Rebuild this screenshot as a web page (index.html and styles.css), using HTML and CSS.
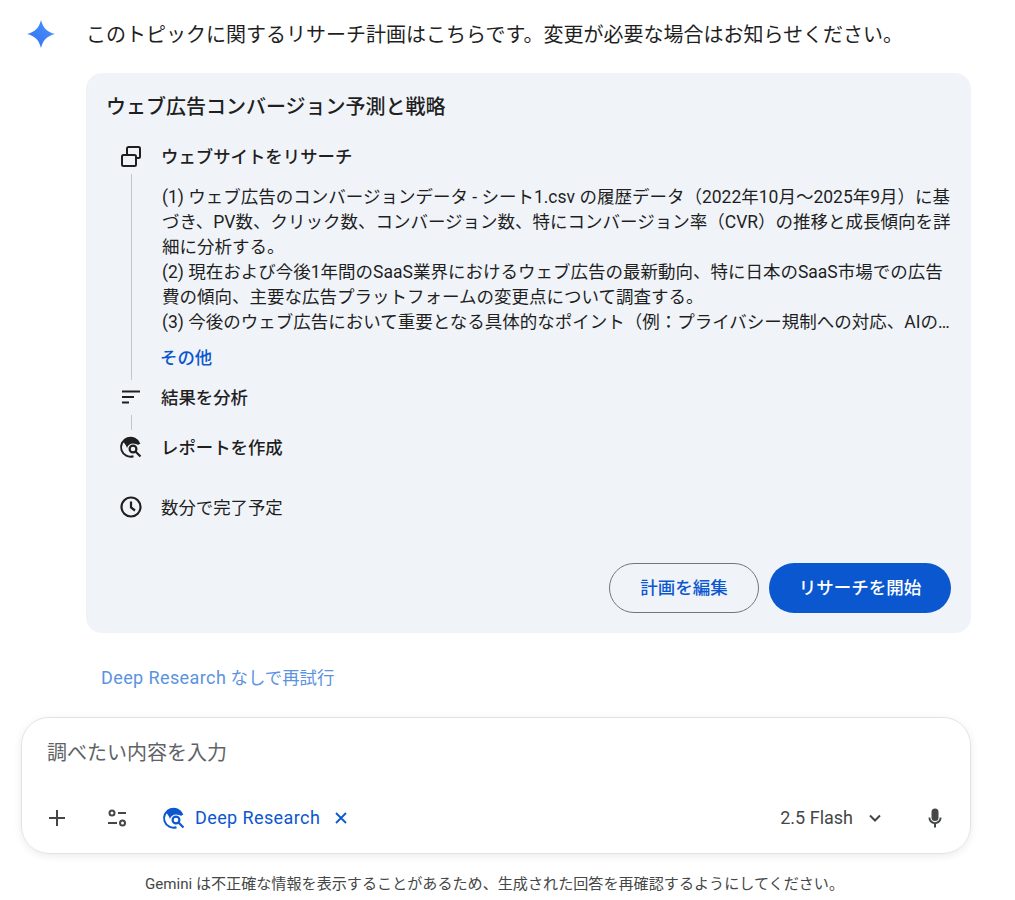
FILE: index.html
```html
<!DOCTYPE html>
<html lang="ja">
<head>
  <title>Gemini Deep Research</title>
  <link rel="stylesheet" href="styles.css">
</head>
<body>
  <div class="response">
    <svg class="spark" viewBox="0 0 32 32" width="32" height="32">
      <defs>
        <linearGradient id="sparkGrad" x1="0" y1="1" x2="1" y2="0">
          <stop offset="0" stop-color="#2f6df0"/>
          <stop offset="1" stop-color="#4a96ff"/>
        </linearGradient>
      </defs>
      <path fill="url(#sparkGrad)" d="M16 2C18 10 22 14 30 16C22 18 18 22 16 30C14 22 10 18 2 16C10 14 14 10 16 2Z"/>
    </svg>
    <div class="response-body">
      <p class="intro">このトピックに関するリサーチ計画はこちらです。変更が必要な場合はお知らせください。</p>

      <div class="plan-card">
        <h2>ウェブ広告コンバージョン予測と戦略</h2>

        <div class="step">
          <svg class="step-icon" viewBox="0 0 24 24" width="24" height="24" fill="none" stroke="#1f1f1f" stroke-width="2">
            <rect x="3" y="11" width="14" height="11" rx="1.5"/>
            <path d="M8 11V4.500C8 3.700 8.700 3 9.500 3H19.500C20.300 3 21 3.700 21 4.500V12.500C21 13.300 20.300 14 19.500 14H17"/>
          </svg>
          <span class="step-title">ウェブサイトをリサーチ</span>
        </div>
        <div class="step-detail">
          <div class="rail rail-long"></div>
          <div class="detail-text">
            <p class="plan-text">(1) ウェブ広告のコンバージョンデータ - シート1.csv の履歴データ（2022年10月～2025年9月）に基づき、PV数、クリック数、コンバージョン数、特にコンバージョン率（CVR）の推移と成長傾向を詳細に分析する。<br>(2) 現在および今後1年間のSaaS業界におけるウェブ広告の最新動向、特に日本のSaaS市場での広告費の傾向、主要な広告プラットフォームの変更点について調査する。<br>(3) 今後のウェブ広告において重要となる具体的なポイント（例：プライバシー規制への対応、AIの…</p>
            <a class="more-link">その他</a>
          </div>
        </div>

        <div class="step step-analyze">
          <svg class="step-icon" viewBox="0 0 24 24" width="24" height="24" fill="none" stroke="#1f1f1f" stroke-width="2">
            <path d="M3 6.500H21M3 12H15M3 17.500H10"/>
          </svg>
          <span class="step-title">結果を分析</span>
        </div>
        <div class="rail rail-short"></div>
        <div class="step">
          <svg class="step-icon research-icon" viewBox="0 0 24 24" width="24" height="24">
            <path class="globe-ring" d="M20.500 9A9.500 9.500 0 1 0 14.500 21.200"/>
            <path class="globe-land" d="M12 3A9 9 0 0 0 4.500 7C6 9 7.500 11 8 13C9 10 11 8.500 14 8.500C16 8.500 18 9.500 19.500 10L20 8A9 9 0 0 0 12 3Z"/>
            <circle class="globe-lens" cx="14" cy="14" r="3.400"/>
            <path class="globe-lens" d="M16.500 16.500L21.500 21.500"/>
          </svg>
          <span class="step-title">レポートを作成</span>
        </div>
        <div class="step step-eta">
          <svg class="step-icon" viewBox="0 0 24 24" width="24" height="24" fill="none" stroke="#1f1f1f" stroke-width="2.200">
            <circle cx="12" cy="12" r="9.500"/>
            <path d="M12 6.500V12.500L16 15.500"/>
          </svg>
          <span class="step-eta-text">数分で完了予定</span>
        </div>

        <div class="card-actions">
          <button class="btn btn-outline">計画を編集</button>
          <button class="btn btn-primary">リサーチを開始</button>
        </div>
      </div>

      <a class="retry-link"><span class="brand-name">Deep Research</span> なしで再試行</a>
    </div>
  </div>

  <div class="composer">
    <div class="composer-input">調べたい内容を入力</div>
    <div class="composer-tools">
      <svg class="tool-plus" viewBox="0 0 24 24" width="24" height="24" fill="none" stroke="#444746" stroke-width="2">
        <path d="M12 4V20M4 12H20"/>
      </svg>
      <svg class="tool-sliders" viewBox="0 0 24 24" width="24" height="24" fill="none" stroke="#444746" stroke-width="2">
        <circle cx="7" cy="7" r="2.500"/>
        <path d="M13 7H21M3 17H12"/>
        <circle cx="17.500" cy="17" r="2.500"/>
      </svg>
      <svg class="tool-research research-icon research-icon-blue" viewBox="0 0 24 24" width="24" height="24">
        <path class="globe-ring" d="M20.500 9A9.500 9.500 0 1 0 14.500 21.200"/>
        <path class="globe-land" d="M12 3A9 9 0 0 0 4.500 7C6 9 7.500 11 8 13C9 10 11 8.500 14 8.500C16 8.500 18 9.500 19.500 10L20 8A9 9 0 0 0 12 3Z"/>
        <circle class="globe-lens" cx="14" cy="14" r="3.400"/>
        <path class="globe-lens" d="M16.500 16.500L21.500 21.500"/>
      </svg>
      <span class="tool-label">Deep Research</span>
      <svg class="tool-close" viewBox="0 0 16 16" width="16" height="16" fill="none" stroke="#0b57d0" stroke-width="1.800">
        <path d="M3 3L13 13M13 3L3 13"/>
      </svg>
      <span class="model-name">2.5 Flash</span>
      <svg class="model-caret" viewBox="0 0 16 16" width="16" height="16" fill="none" stroke="#444746" stroke-width="2">
        <path d="M3 5.500L8 10.500L13 5.500"/>
      </svg>
      <svg class="tool-mic" viewBox="0 0 24 24" width="24" height="24" fill="#444746">
        <rect x="8.500" y="2.500" width="7" height="12.500" rx="3.500"/>
        <path d="M5.500 11.500H7.300A4.700 4.700 0 0 0 16.700 11.500H18.500A6.500 6.500 0 0 1 13 17.900V21.500H11V17.900A6.500 6.500 0 0 1 5.500 11.500Z"/>
      </svg>
    </div>
  </div>

  <p class="disclaimer">Gemini は不正確な情報を表示することがあるため、生成された回答を再確認するようにしてください。</p>
</body>
</html>
```

FILE: styles.css
```css
body {
  margin: 0;
  padding: 0;
  font-family: Roboto, "Noto Sans CJK JP", sans-serif;
  color: #1f1f1f;
  background-color: #ffffff;
}
p {
  margin: 0;
}
.response {
  display: flex;
  padding: 19px 44px 0 25px;
}
.spark {
  flex: none;
  margin: -1px 29px 0 0;
}
.response-body {
  flex: 1;
  min-width: 0;
}
.intro {
  font-size: 20px;
  line-height: 32px;
  margin-bottom: 22px;
}
.plan-card {
  background-color: #f0f4f9;
  border-radius: 16px;
  height: 560px;
  box-sizing: border-box;
  padding: 20px 20px 20px 21px;
  display: flex;
  flex-direction: column;
}
.plan-card h2 {
  margin: 0 0 21px -1px;
  font-size: 20px;
  line-height: 28px;
  font-weight: 500;
}
.step {
  display: flex;
  align-items: center;
  height: 28px;
  padding-left: 12px;
}
.step-icon {
  flex: none;
  margin-right: 18px;
}
.step-title,
.step-eta-text {
  font-size: 17.4px;
  margin-bottom: 2px;
}
.step-title {
  font-weight: 500;
}
.research-icon {
  --icon-color: #1f1f1f;
}
.research-icon-blue {
  --icon-color: #0b57d0;
}
.globe-ring {
  fill: none;
  stroke: var(--icon-color);
  stroke-width: 2;
}
.globe-land {
  fill: var(--icon-color);
}
.globe-lens {
  fill: none;
  stroke: var(--icon-color);
  stroke-width: 2.2;
}
.step-detail {
  display: flex;
  padding-left: 24px;
}
.rail {
  width: 1px;
  background-color: #c4c7c5;
}
.rail-long {
  flex: none;
  height: 206px;
  margin-top: 4px;
  margin-right: 30px;
}
.rail-short {
  height: 15px;
  margin: 4px 0 3px 24px;
}
.detail-text {
  min-width: 0;
  padding-top: 15px;
}
.plan-text {
  font-size: 17.5px;
  line-height: 25px;
}
.more-link {
  display: block;
  margin: 11px 0 0 -2px;
  font-size: 17.4px;
  line-height: 24px;
  font-weight: 500;
  color: #0b57d0;
}
.step-analyze {
  margin-top: 3px;
}
.step-eta {
  margin-top: 32px;
}
.card-actions {
  margin-top: auto;
  display: flex;
  justify-content: flex-end;
  gap: 10px;
}
.btn {
  height: 50px;
  padding: 0 0 3px;
  border-radius: 25px;
  font-family: inherit;
  font-size: 17.5px;
  font-weight: 500;
}
.btn-outline {
  width: 150px;
  background: transparent;
  border: 1px solid #747775;
  color: #0b57d0;
}
.btn-primary {
  width: 182px;
  background-color: #0b57d0;
  border: none;
  color: #ffffff;
}
.retry-link {
  display: block;
  margin: 33px 0 0 15px;
  font-size: 17.4px;
  line-height: 24px;
  color: #5b93e0;
}
.brand-name {
  font-size: 18px;
  letter-spacing: 0.4px;
}
.composer {
  box-sizing: border-box;
  width: 950px;
  height: 137px;
  margin: 27px 0 0 21px;
  padding: 21px 23px 0 25px;
  border: 1px solid #e3e3e3;
  border-radius: 28px;
  box-shadow: 0 2px 8px rgba(0, 0, 0, 0.08);
}
.composer-input {
  font-size: 20px;
  line-height: 28px;
  color: #5f6368;
}
.composer-tools {
  display: flex;
  align-items: center;
  margin-top: 35px;
  height: 32px;
}
.tool-plus {
  margin-left: -2px;
}
.tool-sliders {
  margin-left: 36px;
}
.tool-research {
  margin-left: 33px;
}
.tool-label {
  margin: 0 0 2px 9px;
  font-size: 18px;
  letter-spacing: 0.4px;
  color: #0b57d0;
}
.tool-close {
  margin-left: 13px;
}
.model-name {
  margin: 0 0 2px auto;
  font-size: 18px;
  color: #444746;
}
.model-caret {
  margin-left: 14px;
}
.tool-mic {
  margin-left: 40px;
}
.disclaimer {
  margin-top: 20px;
  padding-right: 26px;
  text-align: center;
  font-size: 15.1px;
  line-height: 20px;
  color: #444746;
}
```
